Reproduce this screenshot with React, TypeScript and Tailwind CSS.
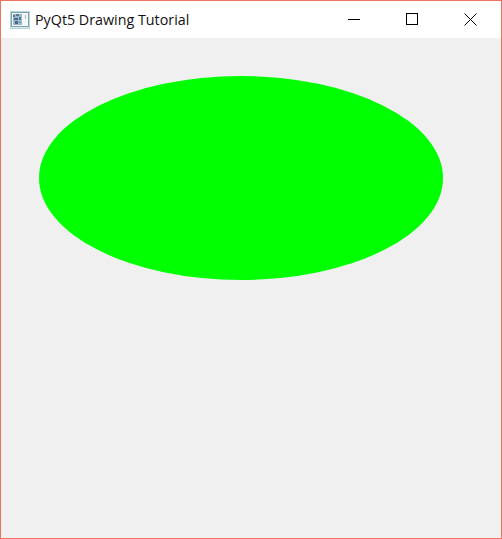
export default function App() {
  return (
    <div className="w-[502px] h-[539px] flex flex-col border border-[#f0735f] bg-[#f0f0f0] overflow-hidden">
      <div className="h-[37px] shrink-0 bg-white flex items-center">
        <svg className="ml-[9px] w-[20px] h-[18px] shrink-0" viewBox="0 0 20 18">
          <rect x="0.5" y="0.5" width="19" height="17" fill="#d8edf3" stroke="#b4d3dc" />
          <rect x="1.5" y="1.5" width="17" height="14" fill="#f4f6f6" stroke="#7fa3ae" />
          <rect x="3" y="3" width="9" height="11" fill="#9db8c9" />
          <rect x="3" y="4" width="2" height="2" fill="#4f7a99" />
          <rect x="6" y="3" width="3" height="2" fill="#4f7a99" />
          <rect x="4" y="7" width="4" height="2" fill="#3f6c8e" />
          <rect x="9" y="6" width="2" height="3" fill="#4f7a99" />
          <rect x="5" y="10" width="3" height="3" fill="#3f6c8e" />
          <rect x="9" y="11" width="2" height="1" fill="#6a90aa" />
          <rect x="15" y="4" width="1" height="4" fill="#aab9bf" />
        </svg>
        <span className="ml-[5px] text-[14.3px] leading-[20px] text-[#111111] font-['Open_Sans',sans-serif] whitespace-nowrap">
          PyQt5 Drawing Tutorial
        </span>
        <div className="ml-auto flex items-center h-full">
          <svg className="w-[58px] h-[37px]" viewBox="0 0 58 37">
            <line x1="23" y1="18.5" x2="35" y2="18.5" stroke="#000" strokeWidth="1" />
          </svg>
          <svg className="w-[58px] h-[37px]" viewBox="0 0 58 37">
            <rect x="23.5" y="12.5" width="11" height="11" fill="none" stroke="#000" strokeWidth="1" />
          </svg>
          <svg className="w-[59px] h-[37px] mr-[1px]" viewBox="0 0 59 37">
            <path d="M23.5 12.5 L35.5 24.5 M35.5 12.5 L23.5 24.5" fill="none" stroke="#000" strokeWidth="1" />
          </svg>
        </div>
      </div>
      <div className="flex-1 pl-[38px] pt-[38px]">
        <div className="w-[404px] h-[204px] rounded-[50%] bg-[#00ff00]" />
      </div>
    </div>
  );
}
